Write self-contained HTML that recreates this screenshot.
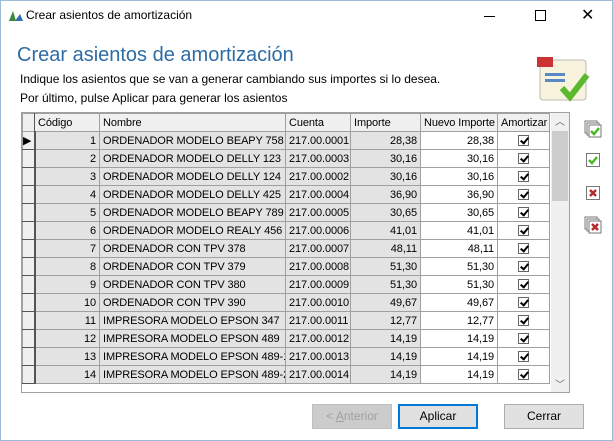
<!DOCTYPE html>
<html><head><meta charset="utf-8"><style>
*{margin:0;padding:0;box-sizing:border-box}
body{width:613px;height:441px;background:#fff;font-family:"Liberation Sans",sans-serif;position:relative;overflow:hidden}
.win{position:absolute;left:0;top:0;width:613px;height:441px;border:1px solid #9fbad6}
.t{position:absolute;font-size:12px;color:#000;white-space:nowrap}
table{border-collapse:collapse;position:absolute;left:22px;top:113px;font-size:11px;table-layout:fixed;width:527px}
td{height:18px;border:1px solid #a0a0a0;padding:0 3px;white-space:nowrap;overflow:hidden;background:#e3e3e3;line-height:16px;letter-spacing:-0.1px}
tr.h td{background:#f0f0f0;height:18px;border-color:#a0a0a0}
td.r{text-align:right}
td.w{background:#fff}
td.i{background:#f0f0f0;border-right:2px solid #555;border-bottom:1px solid #555;padding:0;font-size:11px}
.cb{display:inline-block;width:11px;height:11px;border:1px solid #666;background:#fff;position:relative;vertical-align:middle}
.cb:after{content:"";position:absolute;left:3px;top:0px;width:3px;height:6px;border:solid #000;border-width:0 2px 2px 0;transform:rotate(40deg)}
.btn{position:absolute;height:25px;width:80px;border:1px solid #adadad;background:#e1e1e1;font-size:12px;text-align:center;line-height:23px}
</style></head><body>
<div class="win"></div>
<svg style="position:absolute;left:8px;top:9px" width="16" height="14"><path d="M1 12 L5 2 L8 12Z" fill="#3a8a3a"/><path d="M7 12 L12 5 L15 12Z" fill="#2a6fb0"/></svg>
<div class="t" style="left:26px;top:8px">Crear asientos de amortización</div>
<div style="position:absolute;left:484px;top:16px;width:11px;height:1px;background:#000"></div>
<div style="position:absolute;left:535px;top:10px;width:11px;height:11px;border:1px solid #000"></div>
<div class="t" style="left:581px;top:5px;font-size:16px">✕</div>
<div class="t" style="left:17px;top:44px;font-size:20px;color:#2e6ca4">Crear asientos de amortización</div>
<div class="t" style="left:20px;top:72px">Indique los asientos que se van a generar cambiando sus importes si lo desea.</div>
<div class="t" style="left:20px;top:91px">Por último, pulse Aplicar para generar los asientos</div>
<svg style="position:absolute;left:525px;top:55px" width="80" height="50"><rect x="15" y="5" width="46" height="40" rx="3" fill="#f7f3dc" stroke="#bbb"/><rect x="20" y="18" width="20" height="3" fill="#5a8ac6"/><rect x="20" y="24" width="20" height="3" fill="#5a8ac6"/><rect x="12" y="2" width="16" height="10" fill="#c33"/><path d="M37 33 L45 42 L62 20" stroke="#5cb82e" stroke-width="6" fill="none"/></svg>
<table>
<colgroup><col style="width:12px"><col style="width:65px"><col style="width:186px"><col style="width:65px"><col style="width:70px"><col style="width:77px"><col style="width:52px"></colgroup>
<tr class="h"><td class="i" style="border-right:1px solid #555"></td><td>Código</td><td>Nombre</td><td>Cuenta</td><td>Importe</td><td>Nuevo Importe</td><td>Amortizar</td></tr>
<tr><td class="i">▶</td><td class="r">1</td><td>ORDENADOR MODELO BEAPY 758</td><td>217.00.0001</td><td class="r">28,38</td><td class="r w">28,38</td><td class="w" style="text-align:center"><span class="cb"></span></td></tr>
<tr><td class="i"></td><td class="r">2</td><td>ORDENADOR MODELO DELLY 123</td><td>217.00.0003</td><td class="r">30,16</td><td class="r w">30,16</td><td class="w" style="text-align:center"><span class="cb"></span></td></tr>
<tr><td class="i"></td><td class="r">3</td><td>ORDENADOR MODELO DELLY 124</td><td>217.00.0002</td><td class="r">30,16</td><td class="r w">30,16</td><td class="w" style="text-align:center"><span class="cb"></span></td></tr>
<tr><td class="i"></td><td class="r">4</td><td>ORDENADOR MODELO DELLY 425</td><td>217.00.0004</td><td class="r">36,90</td><td class="r w">36,90</td><td class="w" style="text-align:center"><span class="cb"></span></td></tr>
<tr><td class="i"></td><td class="r">5</td><td>ORDENADOR MODELO BEAPY 789</td><td>217.00.0005</td><td class="r">30,65</td><td class="r w">30,65</td><td class="w" style="text-align:center"><span class="cb"></span></td></tr>
<tr><td class="i"></td><td class="r">6</td><td>ORDENADOR MODELO REALY 456</td><td>217.00.0006</td><td class="r">41,01</td><td class="r w">41,01</td><td class="w" style="text-align:center"><span class="cb"></span></td></tr>
<tr><td class="i"></td><td class="r">7</td><td>ORDENADOR CON TPV 378</td><td>217.00.0007</td><td class="r">48,11</td><td class="r w">48,11</td><td class="w" style="text-align:center"><span class="cb"></span></td></tr>
<tr><td class="i"></td><td class="r">8</td><td>ORDENADOR CON TPV 379</td><td>217.00.0008</td><td class="r">51,30</td><td class="r w">51,30</td><td class="w" style="text-align:center"><span class="cb"></span></td></tr>
<tr><td class="i"></td><td class="r">9</td><td>ORDENADOR CON TPV 380</td><td>217.00.0009</td><td class="r">51,30</td><td class="r w">51,30</td><td class="w" style="text-align:center"><span class="cb"></span></td></tr>
<tr><td class="i"></td><td class="r">10</td><td>ORDENADOR CON TPV 390</td><td>217.00.0010</td><td class="r">49,67</td><td class="r w">49,67</td><td class="w" style="text-align:center"><span class="cb"></span></td></tr>
<tr><td class="i"></td><td class="r">11</td><td>IMPRESORA MODELO EPSON 347</td><td>217.00.0011</td><td class="r">12,77</td><td class="r w">12,77</td><td class="w" style="text-align:center"><span class="cb"></span></td></tr>
<tr><td class="i"></td><td class="r">12</td><td>IMPRESORA MODELO EPSON 489</td><td>217.00.0012</td><td class="r">14,19</td><td class="r w">14,19</td><td class="w" style="text-align:center"><span class="cb"></span></td></tr>
<tr><td class="i"></td><td class="r">13</td><td>IMPRESORA MODELO EPSON 489-1</td><td>217.00.0013</td><td class="r">14,19</td><td class="r w">14,19</td><td class="w" style="text-align:center"><span class="cb"></span></td></tr>
<tr><td class="i"></td><td class="r">14</td><td>IMPRESORA MODELO EPSON 489-2</td><td>217.00.0014</td><td class="r">14,19</td><td class="r w">14,19</td><td class="w" style="text-align:center"><span class="cb"></span></td></tr>
</table>
<div style="position:absolute;left:21px;top:112px;width:549px;height:281px;border:1px solid #a0a0a0;pointer-events:none"></div>
<div style="position:absolute;left:551px;top:113px;width:18px;height:279px;background:#f0f0f0"></div>
<div style="position:absolute;left:552px;top:131px;width:16px;height:70px;background:#cdcdcd"></div>
<div class="t" style="left:555px;top:113px;font-size:10px;color:#606060">︿</div>
<div class="t" style="left:555px;top:376px;font-size:10px;color:#606060">﹀</div>
<svg style="position:absolute;left:584px;top:119px" width="20" height="125">
<g fill="#fff" stroke="#777"><rect x="1" y="2" width="12" height="12"/><rect x="3" y="4" width="12" height="12"/><rect x="5" y="6" width="12" height="12"/></g>
<path d="M7 12 l3 3 l5 -6" stroke="#4cb82a" stroke-width="2.5" fill="none"/>
<rect x="2.5" y="34.5" width="13" height="13" fill="#fff" stroke="#777"/><path d="M5 41 l3 3 l5 -6" stroke="#4cb82a" stroke-width="2.5" fill="none"/>
<rect x="2.5" y="67.5" width="13" height="13" fill="#fff" stroke="#777"/><path d="M6 71 l6 6 M12 71 l-6 6" stroke="#b52a2a" stroke-width="2.5"/>
<g fill="#fff" stroke="#777"><rect x="1" y="98" width="12" height="12"/><rect x="3" y="100" width="12" height="12"/><rect x="5" y="102" width="12" height="12"/></g>
<path d="M8 105 l6 6 M14 105 l-6 6" stroke="#b52a2a" stroke-width="2.5"/>
</svg>
<div class="btn" style="left:312px;top:404px;color:#a0a0a0;background:#ccc;border-color:#bfbfbf">&lt; <u>A</u>nterior</div>
<div class="btn" style="left:398px;top:404px;border:2px solid #0078d7;line-height:21px">Aplicar</div>
<div class="btn" style="left:504px;top:404px">Cerrar</div>
</body></html>
